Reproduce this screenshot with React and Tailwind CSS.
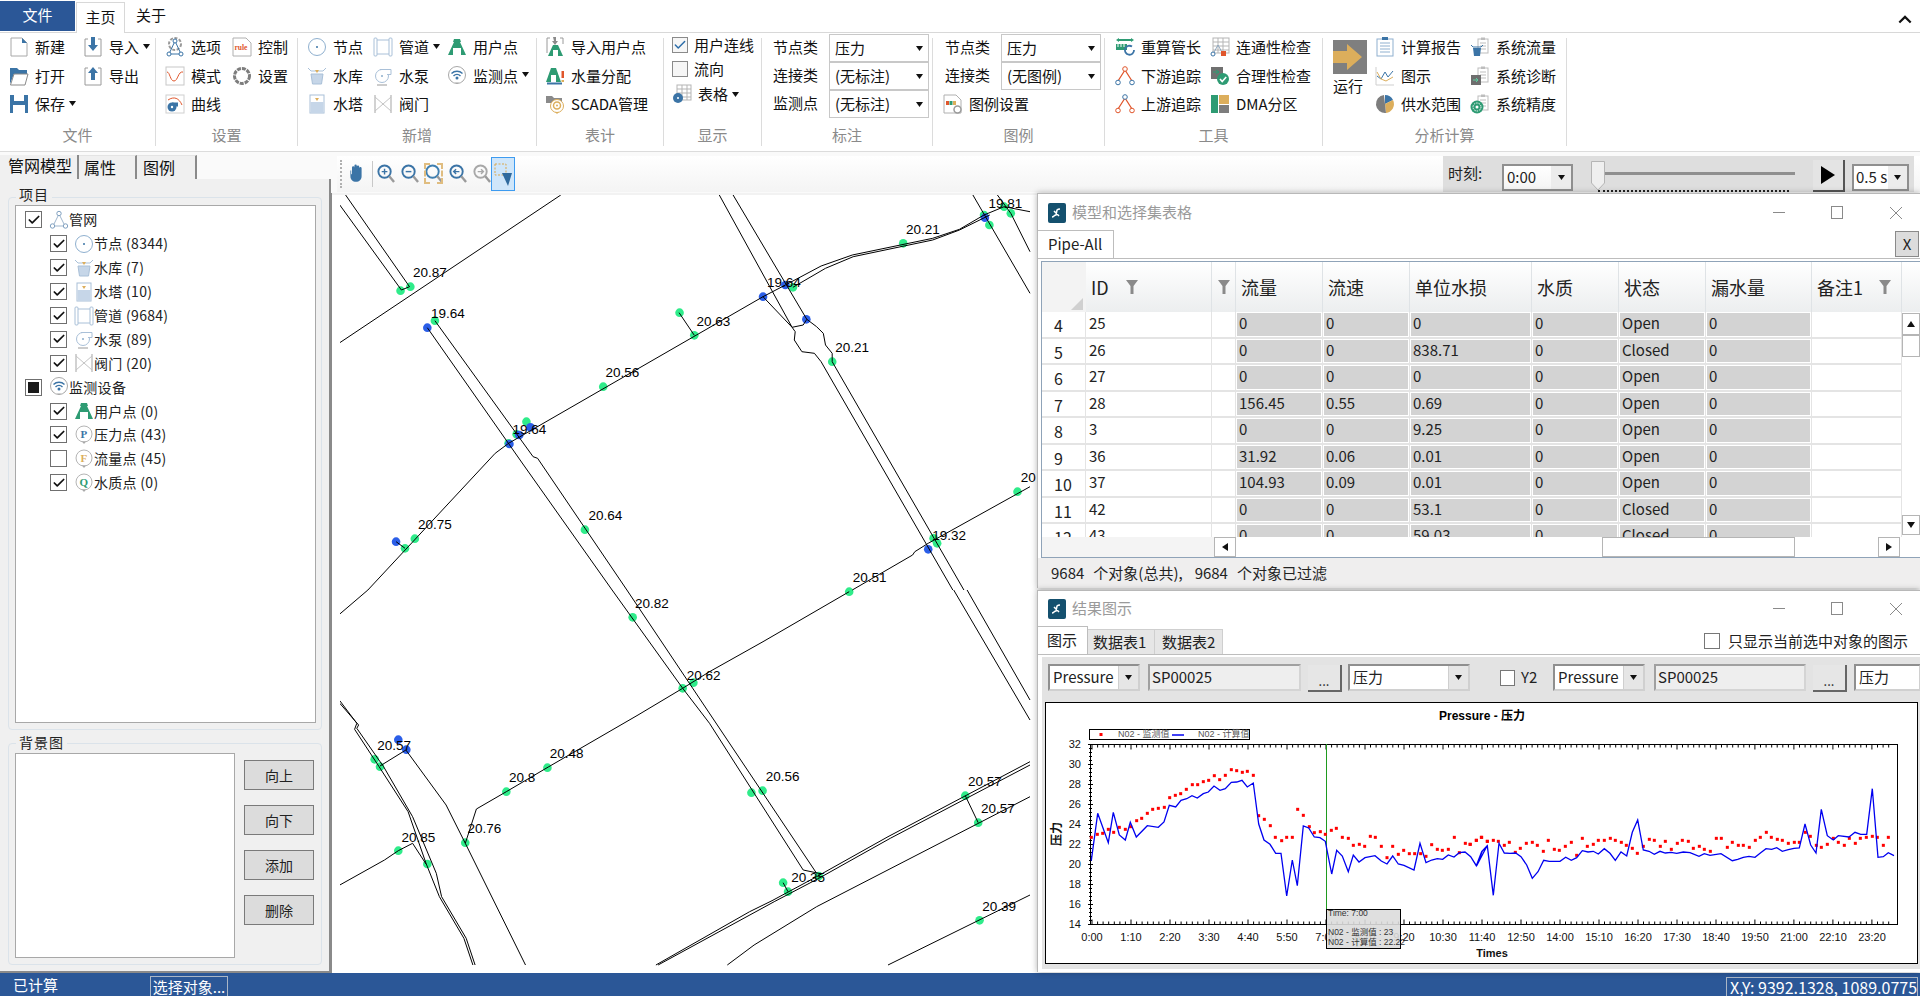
import React from "react";
import { Check } from "lucide-react";

const BLUE = "#3b74a6";
const GOLD = "#dcae5c";
const GREEN = "#2e9b73";
const RED = "#e0562c";
const PALE = "#c6d6e8";

const S = ({ children, size = 20 }) => (
  <svg viewBox="0 0 20 20" width={size} height={size} fill="none" className="block shrink-0">
    {children}
  </svg>
);

// ribbon and tree icons
const NewIcon = () => (
  <S>
    <path d="M2 1h11l5 5v13H2z" fill="#fff" stroke="#a8a8a8" />
    <path d="M13 1l5 5h-5z" fill={BLUE} />
  </S>
);
const OpenIcon = () => (
  <S>
    <path d="M1 2h7l2 2h8v4H5L1 18z" fill={BLUE} />
    <path d="M5 8h14l-3 11H1.500z" fill="#fff" stroke="#8a8a8a" />
  </S>
);
const SaveIcon = () => (
  <S>
    <rect x="1" y="1" width="18" height="18" fill={BLUE} />
    <rect x="5" y="1" width="10" height="6" fill="#fff" />
    <rect x="4" y="11" width="12" height="8" fill="#fff" />
  </S>
);
const DocArrow = ({ up }) => (
  <S>
    <path d="M2 2h3M15 2h3v17H2V2" stroke="#9a9a9a" fill="#fff" />
    <path d={up ? "M10 1l5 6h-3v7H8V7H5z" : "M8 0h4v8h3l-5 6-5-6h3z"} fill={BLUE} />
  </S>
);
const OptionsIcon = () => (
  <S>
    <circle cx="10" cy="7" r="6" stroke="#9a9a9a" strokeWidth="2" strokeDasharray="3 1.500" />
    <path d="M10 4L4 17M10 4l6 13M4 17h12" stroke={BLUE} />
    <circle cx="10" cy="4" r="2" fill="#fff" stroke={BLUE} />
    <circle cx="4" cy="17" r="2" fill="#fff" stroke={BLUE} />
    <circle cx="16" cy="17" r="2" fill="#fff" stroke={BLUE} />
  </S>
);
const RuleIcon = () => (
  <S>
    <path d="M1 1h13l5 5v13H1z" fill="#fff" stroke="#b0b0b0" />
    <text x="2.500" y="13" fontSize="7.500" fontWeight="700" fill={RED} fontFamily="Liberation Serif">rule</text>
  </S>
);
const PatternIcon = () => (
  <S>
    <rect x="1" y="1" width="18" height="18" fill="#fff" stroke="#c8c8c8" />
    <path d="M2 6c3 0 3 9 7 9s4-10 9-9" stroke={RED} />
  </S>
);
const GearIcon = () => (
  <S>
    <circle cx="10" cy="10" r="7.500" stroke="#7d7d7d" strokeWidth="3" strokeDasharray="4 1" />
  </S>
);
const CurveIcon = () => (
  <S>
    <rect x="1" y="1" width="18" height="18" fill="#fff" stroke="#d0d0d0" />
    <path d="M3 6c6-4 11-2 14 5" stroke={RED} />
    <circle cx="7" cy="13" r="4.500" fill={BLUE} />
    <rect x="7" y="8.500" width="6" height="4" fill={BLUE} />
    <circle cx="7" cy="13" r="1.200" fill="#fff" />
  </S>
);
const NodeIcon = () => (
  <S>
    <circle cx="10" cy="10" r="8.500" stroke="#8fb0cf" />
    <circle cx="10" cy="10" r="1" fill={BLUE} />
  </S>
);
const ReservoirIcon = () => (
  <S>
    <path d="M1 2l3 3h12l3-3" stroke="#a9c0d8" />
    <path d="M4 8h12l-1.500 10h-9z" fill={PALE} stroke="#a9c0d8" />
    <path d="M8 4h4l-2 3z" fill={GOLD} />
  </S>
);
const TankIcon = () => (
  <S>
    <rect x="3" y="1" width="14" height="18" fill="#fff" stroke="#a9c0d8" />
    <rect x="3.500" y="8" width="13" height="11" fill={PALE} />
    <path d="M8 4h4l-2 3z" fill={GOLD} />
  </S>
);
const PipeIcon = () => (
  <S>
    <rect x="1" y="1" width="3" height="18" rx="1" fill="#fff" stroke="#a9c0d8" />
    <rect x="16" y="1" width="3" height="18" rx="1" fill="#fff" stroke="#a9c0d8" />
    <path d="M4 3h12M4 17h12" stroke="#a9c0d8" />
  </S>
);
const PumpIcon = () => (
  <S>
    <circle cx="9" cy="10" r="6.500" fill="#fff" stroke="#a9c0d8" />
    <path d="M7 3.500h11v5h-4" fill="#fff" stroke="#a9c0d8" />
    <path d="M4 19h10" stroke="#bbb" strokeWidth="1.500" />
    <circle cx="9" cy="10" r=".8" fill={BLUE} />
  </S>
);
const ValveIcon = () => (
  <S>
    <path d="M2 1v18M18 1v18" stroke="#c4c4c4" strokeWidth="1.500" />
    <path d="M2 3l16 14M18 3L2 17" stroke="#c4c4c4" />
  </S>
);
const UserIcon = () => (
  <S>
    <path d="M7 2h6l1 3h-1l6 13H1L7 5H6z" fill={GREEN} />
    <rect x="6" y="11" width="8" height="7" fill="#fff" />
  </S>
);
const WifiIcon = () => (
  <S>
    <circle cx="10" cy="9" r="8.500" fill="#fff" stroke="#a8a8a8" />
    <path d="M10 18l-2-1.500h4z" fill="#a8a8a8" />
    <path d="M4.500 7.500a8 8 0 0 1 11 0M6.500 10a5 5 0 0 1 7 0" stroke={BLUE} strokeWidth="1.400" />
    <circle cx="10" cy="12" r="1.500" fill={BLUE} />
  </S>
);
const LetterPin = ({ letter, color }) => (
  <S>
    <circle cx="10" cy="9" r="8" fill="#fff" stroke="#b5b5b5" />
    <path d="M10 19l-2-2.500h4z" fill="#a8a8a8" />
    <text x="10" y="13" textAnchor="middle" fontSize="11" fontWeight="700" fill={color} fontFamily="Liberation Serif">{letter}</text>
  </S>
);
const NetIcon = () => (
  <S>
    <path d="M10 4L4 16M10 4l6 12M4 16h12" stroke="#9fb6cd" />
    <circle cx="10" cy="3.500" r="2.200" fill="#fff" stroke="#7fa0c0" />
    <circle cx="3.500" cy="16" r="2.200" fill="#fff" stroke="#7fa0c0" />
    <circle cx="16.500" cy="16" r="2.200" fill="#fff" stroke="#7fa0c0" />
  </S>
);
const ImportUserIcon = () => (
  <S>
    <path d="M2 1h3M15 1h3v6M2 1v15" stroke="#9a9a9a" />
    <path d="M8 0h3v4h2l-3 4-3-4h2z" fill="#8a8a8a" />
    <path d="M8 8h5l5 11H3z" fill={GREEN} />
    <rect x="8" y="13" width="5" height="6" fill="#fff" />
  </S>
);
const AllocIcon = () => (
  <S>
    <path d="M6 2h5l5 14H1z" fill={GREEN} />
    <rect x="6" y="9" width="5" height="7" fill="#fff" />
    <path d="M2 17.500h15" stroke={BLUE} strokeWidth="2" />
    <path d="M16.500 5h2.500v7h-2.500z" fill={RED} />
    <path d="M16.500 14h2.500v2h-2.500z" fill={GOLD} />
  </S>
);
const ScadaIcon = () => (
  <S>
    <path d="M1 2h6l2 2h8v5H1z" fill="#8a8a8a" />
    <circle cx="12" cy="12" r="6.500" fill="#fff" stroke={GOLD} />
    <circle cx="12" cy="11.500" r="3.500" stroke={GOLD} strokeWidth="1.500" />
    <circle cx="12" cy="11.500" r="1" fill={GOLD} />
    <path d="M12 20l-2-2h4z" fill={GOLD} />
  </S>
);
const GridIcon = () => (
  <S>
    <rect x="5" y="1" width="14" height="15" fill="#fff" stroke="#b5b5b5" />
    <path d="M5 5h14M5 9h14M5 13h14M10 1v15M15 1v15" stroke="#b5b5b5" />
    <circle cx="6" cy="14" r="5" fill={BLUE} />
    <rect x="5" y="13" width="2" height="2" fill="#cfe0ef" />
  </S>
);
const LegendIcon = () => (
  <S>
    <path d="M1 1h12l5 5v13H1z" fill="#fff" stroke="#b0b0b0" />
    <rect x="3" y="7" width="3" height="4" fill={RED} />
    <rect x="6.500" y="7" width="3" height="4" fill={GREEN} />
    <rect x="10" y="7" width="3" height="4" fill={GOLD} />
    <circle cx="14.500" cy="15.500" r="3.500" fill="#fff" stroke="#9a9a9a" strokeWidth="1.500" />
  </S>
);
const RecalcIcon = () => (
  <S>
    <path d="M3 3h14" stroke={GREEN} strokeWidth="2" />
    <path d="M1 3l3-2v4zM19 3l-3-2v4z" fill={GREEN} />
    <path d="M1 7h11v6H1z" fill={GREEN} />
    <path d="M3 7v3M6 7v3M9 7v3" stroke="#fff" />
    <path d="M19 13a4.500 4.500 0 1 1-2-3.500" stroke={BLUE} strokeWidth="1.800" />
  </S>
);
const TraceIcon = ({ down }) => (
  <S>
    <path d="M10 4L3 15M10 4l7 11" stroke={RED} strokeWidth="1.300" />
    <circle cx="10" cy="3" r="2.300" fill="#fff" stroke={down ? RED : BLUE} />
    <circle cx="3" cy="16.500" r="2.300" fill="#fff" stroke={down ? BLUE : RED} />
    <circle cx="17" cy="16.500" r="2.300" fill="#fff" stroke={down ? BLUE : RED} />
  </S>
);
const ConnectIcon = () => (
  <S>
    <rect x="3" y="1" width="16" height="15" fill="#fff" stroke="#b5b5b5" />
    <path d="M3 5h16M3 9h16M3 13h16M8 1v15M13 1v15" stroke="#b5b5b5" />
    <path d="M8 8L3 17M8 8l5 9" stroke="#8fa8c0" />
    <circle cx="3" cy="17" r="2" fill="#fff" stroke={BLUE} />
    <rect x="11" y="14" width="5" height="5" fill={RED} />
  </S>
);
const ReasonIcon = () => (
  <S>
    <rect x="1" y="1" width="12" height="12" fill="#707070" />
    <path d="M3 6h6M6 4l3 2-3 2" stroke={GREEN} />
    <circle cx="13" cy="13" r="6" fill={GREEN} />
    <path d="M10 13l2.200 2.500 4-4.500" stroke="#fff" strokeWidth="1.600" />
  </S>
);
const DmaIcon = () => (
  <S>
    <rect x="1" y="1" width="7" height="18" fill={GREEN} />
    <rect x="9" y="1" width="10" height="9" fill={GOLD} />
    <rect x="9" y="11" width="10" height="8" fill="#7d7d7d" />
  </S>
);
const ReportIcon = () => (
  <S>
    <rect x="2" y="2" width="16" height="17" fill="#fff" stroke="#8fb0cf" />
    <rect x="7" y="0" width="6" height="3" fill={BLUE} />
    <path d="M5 6h10M5 9h10M5 12h10M5 15h10" stroke="#8fb0cf" />
  </S>
);
const ChartIcon = () => (
  <S>
    <path d="M1 1v18h18" stroke="#cfcfcf" />
    <path d="M2 10l4 3 4-7 3 5 5-6" stroke={BLUE} />
    <path d="M2 6l4 7 5 2 7-4" stroke={GOLD} />
  </S>
);
const PieIcon = () => (
  <S>
    <path d="M10 10V1a9 9 0 0 1 8 5z" fill={BLUE} />
    <path d="M10 10l8-4a9 9 0 0 1-7 13z" fill={GOLD} />
    <path d="M10 10l1 9a9 9 0 0 1-2-18z" fill="#7d7d7d" />
  </S>
);
const Clip = ({ children }) => (
  <S>
    <rect x="8" y="2" width="10" height="14" fill="#fff" stroke="#bdbdbd" />
    <path d="M10 6h6M10 9h6M10 12h6" stroke="#bdbdbd" />
    <rect x="11" y="0.500" width="4" height="2.500" fill="#bdbdbd" />
    {children}
  </S>
);
const SysFlowIcon = () => (
  <Clip>
    <path d="M1 8l2 2h8l2-2" stroke={BLUE} />
    <path d="M3 11h8l-1 8H4z" fill={BLUE} />
  </Clip>
);
const SysDiagIcon = () => (
  <Clip>
    <rect x="1" y="9" width="10" height="10" fill="#6e6e6e" />
    <path d="M3 14h5M6 12l2 2-2 2" stroke="#5fd0a0" />
  </Clip>
);
const SysPrecIcon = () => (
  <Clip>
    <circle cx="7" cy="13" r="6.500" fill={GREEN} />
    <circle cx="7" cy="13" r="4" stroke="#fff" strokeDasharray="1.500 1" />
    <circle cx="7" cy="13" r="1.500" fill="#fff" />
  </Clip>
);
const RunIcon = () => (
  <svg viewBox="0 0 34 34" width="34" height="34" className="block">
    <rect width="34" height="34" fill="#7f7f7f" />
    <path d="M0 11h14V4l15 13-15 13v-7H0z" fill={GOLD} />
  </svg>
);

const Caret = () => (
  <svg viewBox="0 0 7 5" width="7" height="5" className="block shrink-0">
    <path d="M0 0h7L3.500 5z" fill="#111" />
  </svg>
);

const Item = ({ icon, label, drop }) => (
  <div className="flex items-center h-[28.5px] whitespace-nowrap">
    <span className="w-[20px] mr-[6px] shrink-0">{icon}</span>
    <span>{label}</span>
    {drop && <span className="ml-[4px] mb-[2px]"><Caret /></span>}
  </div>
);

const Group = ({ label, width, children }) => (
  <>
    <div className={`flex flex-col h-[118px] ${width}`}>
      <div className="h-[92px] flex">{children}</div>
      <div className="h-[20px] leading-[20px] text-center text-[#8a8a8a]">{label}</div>
    </div>
    <div className="w-px h-[108px] mt-[5px] bg-[#dcdcdc]" />
  </>
);

const Combo = ({ text }) => (
  <div className="flex items-center justify-between w-[100px] h-[28px] border border-[#c8c8c8] pl-[5px] pr-[5px]">
    <span>{text}</span>
    <Caret />
  </div>
);

const LabelCombo = ({ label, text }) => (
  <div className="flex items-center h-[28px]">
    <span className="w-[56px] -mt-[2px]">{label}</span>
    <Combo text={text} />
  </div>
);

const MiniCheck = ({ checked }) => (
  <span className="w-[16px] h-[16px] border border-[#8a8a8a] bg-[#f6f6f6] flex items-center justify-center shrink-0">
    {checked && <Check size={14} strokeWidth={2.5} color="#2b6ca8" />}
  </span>
);

const Ribbon = () => (
  <div className="h-[119px] flex border-b border-[#dcdcdc] bg-white text-[15px] text-[#111]">
    <Group label="文件" width="w-[155px]">
      <div className="pl-[9px] w-[83px]">
        <Item icon={<NewIcon />} label="新建" />
        <Item icon={<OpenIcon />} label="打开" />
        <Item icon={<SaveIcon />} label="保存" drop />
      </div>
      <div>
        <Item icon={<DocArrow />} label="导入" drop />
        <Item icon={<DocArrow up />} label="导出" />
      </div>
    </Group>
    <Group label="设置" width="w-[141px]">
      <div className="pl-[9px] w-[76px]">
        <Item icon={<OptionsIcon />} label="选项" />
        <Item icon={<PatternIcon />} label="模式" />
        <Item icon={<CurveIcon />} label="曲线" />
      </div>
      <div>
        <Item icon={<RuleIcon />} label="控制" />
        <Item icon={<GearIcon />} label="设置" />
      </div>
    </Group>
    <Group label="新增" width="w-[238px]">
      <div className="pl-[9px] w-[75px]">
        <Item icon={<NodeIcon />} label="节点" />
        <Item icon={<ReservoirIcon />} label="水库" />
        <Item icon={<TankIcon />} label="水塔" />
      </div>
      <div className="w-[74px]">
        <Item icon={<PipeIcon />} label="管道" drop />
        <Item icon={<PumpIcon />} label="水泵" />
        <Item icon={<ValveIcon />} label="阀门" />
      </div>
      <div>
        <Item icon={<UserIcon />} label="用户点" />
        <Item icon={<WifiIcon />} label="监测点" drop />
      </div>
    </Group>
    <Group label="表计" width="w-[126px]">
      <div className="pl-[8px]">
        <Item icon={<ImportUserIcon />} label="导入用户点" />
        <Item icon={<AllocIcon />} label="水量分配" />
        <Item icon={<ScadaIcon />} label="SCADA管理" />
      </div>
    </Group>
    <Group label="显示" width="w-[97px]">
      <div className="pl-[8px]">
        <div className="flex items-center gap-[6px] h-[24px] whitespace-nowrap"><MiniCheck checked />用户连线</div>
        <div className="flex items-center gap-[6px] h-[24px] whitespace-nowrap"><MiniCheck />流向</div>
        <div className="flex items-center h-[26px] whitespace-nowrap">
          <span className="w-[20px] mr-[6px]"><GridIcon /></span>表格<span className="ml-[4px]"><Caret /></span>
        </div>
      </div>
    </Group>
    <Group label="标注" width="w-[170px]">
      <div className="pl-[11px] pt-[1px]">
        <LabelCombo label="节点类" text="压力" />
        <LabelCombo label="连接类" text="(无标注)" />
        <LabelCombo label="监测点" text="(无标注)" />
      </div>
    </Group>
    <Group label="图例" width="w-[171px]">
      <div className="pl-[12px] pt-[1px]">
        <LabelCombo label="节点类" text="压力" />
        <LabelCombo label="连接类" text="(无图例)" />
        <div className="-ml-[2px]"><Item icon={<LegendIcon />} label="图例设置" /></div>
      </div>
    </Group>
    <Group label="工具" width="w-[217px]">
      <div className="pl-[10px] w-[105px]">
        <Item icon={<RecalcIcon />} label="重算管长" />
        <Item icon={<TraceIcon down />} label="下游追踪" />
        <Item icon={<TraceIcon />} label="上游追踪" />
      </div>
      <div>
        <Item icon={<ConnectIcon />} label="连通性检查" />
        <Item icon={<ReasonIcon />} label="合理性检查" />
        <Item icon={<DmaIcon />} label="DMA分区" />
      </div>
    </Group>
    <Group label="分析计算" width="w-[243px]">
      <div className="pl-[10px] pt-[7px] w-[52px]">
        <RunIcon />
        <div className="mt-[1px] whitespace-nowrap">运行</div>
      </div>
      <div className="w-[95px]">
        <Item icon={<ReportIcon />} label="计算报告" />
        <Item icon={<ChartIcon />} label="图示" />
        <Item icon={<PieIcon />} label="供水范围" />
      </div>
      <div>
        <Item icon={<SysFlowIcon />} label="系统流量" />
        <Item icon={<SysDiagIcon />} label="系统诊断" />
        <Item icon={<SysPrecIcon />} label="系统精度" />
      </div>
    </Group>
  </div>
);

const TreeCheck = ({ state }) => (
  <span className="w-[17px] h-[17px] border border-[#6f6f6f] bg-white flex items-center justify-center shrink-0">
    {state === "on" && <Check size={14} strokeWidth={3} color="#111" />}
    {state === "mixed" && <span className="w-[11px] h-[11px] bg-[#1a1a1a]" />}
  </span>
);

const TreeRow = ({ level, state, icon, text }) => (
  <div className={`flex items-center h-[23.9px] whitespace-nowrap ${level === 1 ? "pl-[9px]" : "pl-[34px]"}`}>
    <TreeCheck state={state} />
    <span className="ml-[7px]">{icon}</span>
    <span>{text}</span>
  </div>
);

const SideButton = ({ text }) => (
  <div className="w-[70px] h-[30px] bg-[#dcdcdc] border border-[#7a7a7a] flex items-center justify-center text-[14px]">{text}</div>
);

const LeftPanel = () => (
  <div className="w-[331px] shrink-0 flex flex-col pt-[3px] bg-[#fafafa]">
    <div className="flex h-[24px] text-[16px] text-[#111]">
      <div className="w-[79px] bg-[#f0f0f0] border-r-2 border-[#8a8a8a] pl-[8px] leading-[20px]">管网模型</div>
      <div className="w-[58px] bg-[#f0f0f0] border-r-2 border-[#8a8a8a] pl-[5px] leading-[23px] border-t border-t-[#e4e4e4]">属性</div>
      <div className="w-[60px] bg-[#f0f0f0] border-r-2 border-[#8a8a8a] pl-[6px] leading-[23px] border-t border-t-[#e4e4e4]">图例</div>
    </div>
    <div className="flex-1 bg-[#f0f0f0] border-r-2 border-b-2 border-[#8a8a8a] pt-[18px] pl-[8px] text-[14px] text-[#222]">
      <div className="relative w-[314px] h-[533px] border border-[#dbe3ea] rounded-[4px] pl-[6px] pt-[7px]">
        <span className="absolute left-[7px] -top-[14px] px-[3px] bg-[#f0f0f0] tracking-[1px]">项目</span>
        <div className="w-[301px] h-[518px] bg-white border border-[#a8a8a8] pt-[2px] tracking-[0.3px]">
          <TreeRow level={1} state="on" icon={<NetIcon />} text="管网" />
          <TreeRow level={2} state="on" icon={<NodeIcon />} text="节点 (8344)" />
          <TreeRow level={2} state="on" icon={<ReservoirIcon />} text="水库 (7)" />
          <TreeRow level={2} state="on" icon={<TankIcon />} text="水塔 (10)" />
          <TreeRow level={2} state="on" icon={<PipeIcon />} text="管道 (9684)" />
          <TreeRow level={2} state="on" icon={<PumpIcon />} text="水泵 (89)" />
          <TreeRow level={2} state="on" icon={<ValveIcon />} text="阀门 (20)" />
          <TreeRow level={1} state="mixed" icon={<WifiIcon />} text="监测设备" />
          <TreeRow level={2} state="on" icon={<UserIcon />} text="用户点 (0)" />
          <TreeRow level={2} state="on" icon={<LetterPin letter="P" color={BLUE} />} text="压力点 (43)" />
          <TreeRow level={2} state="off" icon={<LetterPin letter="F" color={GOLD} />} text="流量点 (45)" />
          <TreeRow level={2} state="on" icon={<LetterPin letter="Q" color={GREEN} />} text="水质点 (0)" />
        </div>
      </div>
      <div className="relative w-[314px] h-[222px] mt-[13px] border border-[#dbe3ea] rounded-[4px] pl-[6px] pt-[9px] flex">
        <span className="absolute left-[7px] -top-[12px] px-[3px] bg-[#f0f0f0] tracking-[1px]">背景图</span>
        <div className="w-[220px] h-[205px] bg-white border border-[#a8a8a8]" />
        <div className="ml-[9px] pt-[7px] flex flex-col gap-[15px]">
          <SideButton text="向上" />
          <SideButton text="向下" />
          <SideButton text="添加" />
          <SideButton text="删除" />
        </div>
      </div>
    </div>
  </div>
);

const Mag = ({ children, color = BLUE }) => (
  <svg viewBox="0 0 20 22" width="19" height="21" fill="none" className="block shrink-0">
    <circle cx="9" cy="9" r="6.500" stroke={color} strokeWidth="2" />
    <path d="M14 14l5 6" stroke="#9a9a9a" strokeWidth="2.500" />
    <g stroke={color} strokeWidth="1.500">{children}</g>
  </svg>
);

const Toolbar = () => (
  <div className="h-[41px] pt-[4px] bg-[#fafafa] pl-[6px]">
    <div className="h-[36px] flex items-center justify-between bg-gradient-to-b from-white to-[#f4f4f4]">
      <div className="flex items-center h-full">
        <div className="w-[2px] h-[28px] ml-[3px] border-l-2 border-dotted border-[#b0b0b0]" />
        <svg viewBox="0 0 20 24" width="16" height="20" className="block ml-[6px] -mt-[2px]">
          <path d="M3 9v7c0 4 3 7 7 7s7-3 7-7V6a1.500 1.500 0 0 0-3 0v5V4a1.500 1.500 0 0 0-3 0v7V3a1.500 1.500 0 0 0-3 0v8V5a1.500 1.500 0 0 0-3 0v8l-1 1V9a1 1 0 0 0-1 0z" fill={BLUE} />
        </svg>
        <div className="w-px h-[26px] ml-[8px] mr-[3px] bg-[#c8c8c8]" />
        <div className="flex items-center gap-[5px] -mt-[2px]">
          <Mag><path d="M6 9h6M9 6v6" /></Mag>
          <Mag><path d="M6 9h6" /></Mag>
          <span className="w-[19px] h-[21px] outline-2 outline-dashed outline-[#e0bd80] -outline-offset-2"><Mag color="#3f7fb0" /></span>
          <Mag><path d="M12 9H6M8.500 6.500L6 9l2.500 2.500" /></Mag>
          <Mag color="#a8a8a8"><path d="M6 9h6M9.500 6.500L12 9l-2.500 2.500" /></Mag>
          <div className="w-[24px] h-[34px] -ml-[5px] mt-[2px] bg-[#cfe6fa] border border-[#3d9bf0] flex items-center justify-center">
            <svg viewBox="0 0 20 26" width="20" height="26" className="block">
              <rect x="2" y="3" width="11" height="11" fill="none" stroke="#d9a74f" strokeDasharray="2 1.500" />
              <path d="M9 12h10l-4 13z" fill="#2f6a9e" />
            </svg>
          </div>
        </div>
      </div>
      <div className="w-[471px] h-[36px] mr-[6px] bg-[#dedede] flex items-center text-[15px] text-[#222]">
        <span className="ml-[5px] w-[54px] -mt-[2px]">时刻:</span>
        <div className="w-[71px] h-[27px] mt-[6px] border-2 border-[#8f8f8f] bg-gradient-to-b from-white to-[#f4f4f4] flex items-center justify-between pl-[3px]">
          <span>0:00</span>
          <span className="w-[20px] h-full bg-[#ececec] flex items-center justify-center"><Caret /></span>
        </div>
        <div className="relative ml-[18px] w-[204px] h-[36px]">
          <div className="absolute left-[14px] top-[16px] w-[190px] h-[3px] bg-[#8f8f8f]" />
          <svg viewBox="0 0 14 30" width="14" height="30" className="absolute left-0 top-[5px]">
            <path d="M.5 .5h13V22L7 29 .5 22z" fill="#efefef" stroke="#b5b5b5" />
          </svg>
          <div className="absolute left-[7px] top-[34px] w-[191px] border-t-2 border-dotted border-[#222]" />
        </div>
        <div className="ml-[18px] w-[32px] h-[32px] mt-[3px] bg-[#e4e4e4] border-r-2 border-b-2 border-[#555] flex items-center justify-center">
          <svg viewBox="0 0 14 18" width="14" height="18" className="block"><path d="M0 0l14 9-14 9z" fill="#000" /></svg>
        </div>
        <div className="ml-[7px] w-[57px] h-[27px] mt-[6px] border-2 border-[#8f8f8f] bg-white flex items-center justify-between pl-[2px]">
          <span>0.5 s</span>
          <span className="w-[19px] h-full bg-[#ececec] flex items-center justify-center"><Caret /></span>
        </div>
      </div>
    </div>
  </div>
);

// map coordinates below were read off two crops of the canvas: z7 starts at y 190, z8 at y 590
const z7 = ([x, y]) => [330 + x / 2.24, 190 + y / 3];
const z8 = ([x, y]) => [330 + x / 2.24, 590 + y / 3];
const pts = (list, f) => list.map((p) => f(p).map((n) => n.toFixed(1)).join(",")).join(" ");

const linesZ7 = [
  [[22, 45], [160, 300], [178, 290], [35, 15]],
  [[22, 458], [517, 15]],
  [[218, 413], [432, 822], [632, 1200]],
  [[235, 392], [455, 800], [465, 805], [665, 1200]],
  [[872, 15], [1035, 412], [1060, 405], [1068, 388], [903, 15]],
  [[1068, 388], [1090, 410], [1105, 430], [1110, 465], [1125, 490], [1125, 515], [1420, 1200]],
  [[1035, 412], [1042, 425], [1040, 450], [1057, 485], [1085, 490], [1100, 515], [1395, 1200]],
  [[85, 1200], [370, 790], [400, 760], [970, 320], [1020, 285], [1100, 228], [1170, 195], [1350, 145], [1410, 118], [1465, 75], [1510, 50], [1568, 65]],
  [[1037, 292], [1110, 235], [1172, 200], [1350, 150], [1410, 120], [1478, 75]],
  [[782, 368], [816, 436]],
  [[970, 320], [1035, 412]],
  [[1440, 15], [1568, 310]],
  [[1495, 15], [1525, 70], [1568, 185]],
  [[1170, 1200], [1305, 1095], [1310, 1085], [1340, 1060], [1568, 890]],
  [[148, 1055], [168, 1075]],
];
const linesZ8 = [
  [[85, 0], [22, 72]],
  [[632, 0], [790, 295], [850, 400], [1060, 840], [1095, 850]],
  [[665, 0], [1090, 850]],
  [[1397, 0], [1568, 390]],
  [[1427, 0], [1568, 330]],
  [[1163, 5], [970, 155], [850, 245], [790, 295], [690, 375], [490, 530], [395, 605], [328, 657], [303, 760]],
  [[22, 332], [60, 400], [55, 418], [110, 530], [175, 665], [215, 820], [245, 920], [300, 1045], [320, 1125]],
  [[22, 340], [64, 405], [60, 415], [120, 530], [185, 680], [238, 850], [250, 920], [305, 1045], [325, 1125]],
  [[112, 528], [170, 480], [260, 645], [303, 760], [438, 1125]],
  [[22, 885], [122, 810], [153, 782], [185, 760], [215, 822]],
  [[1568, 515], [1250, 740], [1090, 860], [990, 932], [940, 965], [730, 1125]],
  [[1568, 525], [1255, 745], [1095, 865], [995, 935], [735, 1125]],
  [[1568, 620], [1090, 950], [950, 1065], [890, 1125]],
  [[1568, 915], [1250, 1125]],
  [[1423, 617], [1452, 698]],
  [[1015, 878], [1026, 905]],
];
const greenZ7 = [[158, 302], [180, 290], [235, 392], [816, 436], [783, 368], [612, 590], [440, 695], [418, 733], [400, 760], [168, 1075], [190, 1046], [571, 1019], [1037, 292], [1125, 515], [1284, 160], [1465, 75], [1477, 105], [1510, 50], [1525, 70], [1360, 1060], [1540, 905], [1352, 1045]];
const blueZ7 = [[218, 413], [449, 712], [424, 735], [402, 762], [148, 1055], [970, 320], [1020, 285], [1067, 388], [1467, 83], [1340, 1078]];
const greenZ8 = [[678, 82], [790, 295], [814, 278], [487, 533], [395, 605], [303, 758], [100, 508], [112, 530], [153, 782], [218, 822], [944, 608], [969, 602], [1015, 878], [1026, 905], [1095, 858], [1423, 617], [1452, 698], [1455, 991], [1163, 5]];
const blueZ8 = [[153, 449], [171, 479]];
const labelsZ7 = [["20.87", 186, 245], ["19.64", 226, 370], ["20.63", 821, 392], ["20.56", 617, 545], ["19.64", 409, 716], ["19.64", 979, 275], ["20.21", 1132, 471], ["20.21", 1290, 118], ["19.81", 1475, 40], ["20.75", 197, 1002], ["20.64", 579, 974], ["19.32", 1349, 1036], ["20.51", 1171, 1160], ["20", 1547, 860]];
const labelsZ8 = [["20.82", 683, 40], ["20.62", 799, 256], ["20.48", 492, 490], ["20.8", 401, 562], ["20.56", 976, 558], ["20.76", 308, 713], ["20.85", 160, 740], ["20.57", 106, 465], ["20.35", 1033, 861], ["20.57", 1429, 573], ["20.57", 1458, 655], ["20.39", 1461, 948]];

const Dot = ({ p, fill }) => <circle cx={p[0]} cy={p[1]} r="4.300" fill={fill} />;
const MapLabel = ({ t, p }) => (
  <text x={p[0]} y={p[1] + 5} fontSize="13.500" fill="#000" fontFamily="Liberation Sans">{t}</text>
);

const NetworkMap = () => (
  <svg viewBox="331 193 1589 780" className="block w-[1589px] h-[780px] bg-white">
    <defs>
      <clipPath id="mapClip"><rect x="340" y="195" width="1580" height="778" /></clipPath>
    </defs>
    <rect x="331" y="193" width="1589" height="2" fill="#f2f2f2" />
    <path d="M331.500 193v780" stroke="#8a8a8a" />
    <g clipPath="url(#mapClip)">
      {greenZ7.map((p, i) => <Dot key={i} p={z7(p)} fill="#2fec8a" />)}
      {greenZ8.map((p, i) => <Dot key={i} p={z8(p)} fill="#2fec8a" />)}
      {blueZ7.map((p, i) => <Dot key={i} p={z7(p)} fill="#2b5ee8" />)}
      {blueZ8.map((p, i) => <Dot key={i} p={z8(p)} fill="#2b5ee8" />)}
      {linesZ7.map((l, i) => <polyline key={i} points={pts(l, z7)} fill="none" stroke="#000" strokeWidth="1" />)}
      {linesZ8.map((l, i) => <polyline key={i} points={pts(l, z8)} fill="none" stroke="#000" strokeWidth="1" />)}
      {labelsZ7.map(([t, x, y], i) => <MapLabel key={i} t={t} p={z7([x, y])} />)}
      {labelsZ8.map(([t, x, y], i) => <MapLabel key={i} t={t} p={z8([x, y])} />)}
    </g>
  </svg>
);

const AppIcon = () => (
  <svg viewBox="0 0 18 20" width="18" height="20" className="block shrink-0">
    <rect width="18" height="20" rx="2" fill="#14506e" />
    <path d="M4 14c2 0 2-2 4-2l1-5c1-1 2-1 3-1M6 8l5 5" stroke="#fff" strokeWidth="1.500" fill="none" />
  </svg>
);

const WindowTitle = ({ title, height }) => (
  <div className={`flex items-center ${height} pl-[10px] text-[15px] text-[#9a9a9a]`}>
    <AppIcon />
    <span className="ml-[6px]">{title}</span>
    <div className="ml-auto flex items-center">
      <span className="w-[12px] h-px bg-[#8a8a8a]" />
      <span className="ml-[46px] w-[12px] h-[13px] border border-[#8a8a8a]" />
      <svg viewBox="0 0 14 14" width="14" height="14" className="block ml-[46px] mr-[17px]">
        <path d="M1 1l12 12M13 1L1 13" stroke="#8a8a8a" />
      </svg>
    </div>
  </div>
);

const tableCols = "grid grid-cols-[44px_126px_24px_87px_87px_122px_87px_87px_106px_90px]";
const tableRows = [
  [4, 25, 0, 0, 0, 0, "Open", 0],
  [5, 26, 0, 0, "838.71", 0, "Closed", 0],
  [6, 27, 0, 0, 0, 0, "Open", 0],
  [7, 28, "156.45", "0.55", "0.69", 0, "Open", 0],
  [8, 3, 0, 0, "9.25", 0, "Open", 0],
  [9, 36, "31.92", "0.06", "0.01", 0, "Open", 0],
  [10, 37, "104.93", "0.09", "0.01", 0, "Open", 0],
  [11, 42, 0, 0, "53.1", 0, "Closed", 0],
  [12, 43, 0, 0, "59.03", 0, "Closed", 0],
];

const Funnel = () => (
  <svg viewBox="0 0 12 14" width="12" height="14" className="block shrink-0">
    <path d="M0 0h12L7.500 6v8h-3V6z" fill="#8a8a8a" />
  </svg>
);

const Head = ({ text, filter, pad = "pl-[5px]" }) => (
  <div className={`flex items-center h-full ${pad} border-r border-[#dfe3e6] text-[18px] text-[#222]`}>
    {text}
    {filter && <span className={text === "ID" ? "ml-[17px]" : "ml-[16px]"}><Funnel /></span>}
  </div>
);

const Cell = ({ v, gray }) => (
  <div className="h-full border-r border-b-2 border-[#e4e4e4] p-[1px]">
    <div className={`h-full pl-[2px] leading-[19px] text-[15px] text-[#222] ${gray ? "bg-[#d3d3d3]" : ""}`}>{v}</div>
  </div>
);

const ScrollBtn = ({ d, cls }) => (
  <div className={`bg-white border border-[#b5b5b5] flex items-center justify-center ${cls}`}>
    <svg viewBox="0 0 10 10" width="10" height="10" className="block"><path d={d} fill="#111" /></svg>
  </div>
);

const TableWindow = () => (
  <div className="absolute left-[706px] top-0 w-[883px] h-[395px] bg-white border-l border-t border-[#b8b8b8] shadow-[0_0_6px_rgba(0,0,0,0.3)] flex flex-col">
    <WindowTitle title="模型和选择集表格" height="h-[37px]" />
    <div className="h-[28px] flex justify-between items-end border-b border-[#bdbdbd] text-[15px] text-[#222]">
      <div className="w-[76px] h-[28px] bg-white border-t border-r border-[#bdbdbd] pl-[10px] leading-[26px]">Pipe-All</div>
      <div className="w-[24px] h-[26px] mr-[1px] mb-[1px] bg-[#dcdcdc] border border-[#8a8a8a] text-center leading-[24px]">X</div>
    </div>
    <div className="mt-[2px] ml-[3px] h-[297px] border-t border-l border-b border-[#8fa3b8] flex flex-col">
      <div className={`${tableCols} h-[50px] bg-gradient-to-b from-white to-[#eceeef] shrink-0`}>
        <div className="relative bg-[#f3f3f3]">
          <svg viewBox="0 0 12 12" width="12" height="12" className="absolute right-[3px] bottom-[2px]"><path d="M12 0v12H0z" fill="#d0d0d0" /></svg>
        </div>
        <Head text="ID" filter />
        <div className="flex items-center justify-center border-r border-[#dfe3e6]"><Funnel /></div>
        <Head text="流量" />
        <Head text="流速" />
        <Head text="单位水损" />
        <Head text="水质" />
        <Head text="状态" />
        <Head text="漏水量" />
        <Head text="备注1" filter />
      </div>
      <div className="flex h-[225px] shrink-0">
        <div className="w-[860px] overflow-hidden">
          {tableRows.map((r) => (
            <div key={r[0]} className={`${tableCols} h-[26.5px]`}>
              <div className="bg-white border-r border-b-2 border-[#e4e4e4] pl-[12px] pt-[3px] text-[16px] leading-[20px] text-[#222]">{r[0]}</div>
              <Cell v={r[1]} />
              <Cell />
              <Cell v={r[2]} gray />
              <Cell v={r[3]} gray />
              <Cell v={r[4]} gray />
              <Cell v={r[5]} gray />
              <Cell v={r[6]} gray />
              <Cell v={r[7]} gray />
              <Cell />
            </div>
          ))}
        </div>
        <div className="flex-1 bg-white flex flex-col pt-[1px]">
          <ScrollBtn d="M5 2l4 6H1z" cls="h-[22px]" />
          <div className="h-[22px] border border-[#b5b5b5]" />
          <div className="flex-1" />
          <ScrollBtn d="M5 8L1 2h8z" cls="h-[20px] mb-[2px]" />
        </div>
      </div>
      <div className="flex-1 flex items-stretch bg-white">
        <div className="w-[172px] bg-[#f4f4f4]" />
        <ScrollBtn d="M2 5l6-4v8z" cls="w-[22px]" />
        <div className="w-[366px]" />
        <div className="w-[193px] border border-[#b5b5b5]" />
        <div className="w-[83px]" />
        <ScrollBtn d="M8 5L2 1v8z" cls="w-[22px]" />
      </div>
    </div>
    <div className="flex-1 bg-[#efeeee] flex items-center pl-[13px] text-[15px] text-[#222] whitespace-pre">
      <span>9684</span>
      <span className="ml-[9px]">个对象(总共),</span>
      <span className="ml-[12px]">9684</span>
      <span className="ml-[9px]">个对象已过滤</span>
    </div>
  </div>
);

const DropField = ({ text, w }) => (
  <div className={`flex items-center justify-between h-[27px] ${w} bg-white border-2 border-[#d0d0d0] border-t-[#8f8f8f] border-l-[#8f8f8f] pl-[3px] overflow-hidden shrink-0`}>
    <span>{text}</span>
    <span className="w-[20px] h-full bg-[#e6e6e6] border-l border-[#cfcfcf] flex items-center justify-center"><Caret /></span>
  </div>
);
const TextField = ({ text, w }) => (
  <div className={`flex items-center h-[27px] ${w} bg-[#eeeeee] border-2 border-[#d4d4d4] border-t-[#a0a0a0] border-l-[#a0a0a0] pl-[2px] shrink-0`}>{text}</div>
);
const DotsButton = () => (
  <div className="w-[34px] h-[27px] mt-[1px] bg-[#e6e6e6] border-r-2 border-b-2 border-[#666] flex items-center justify-center text-[13px] leading-[13px] pt-[6px] shrink-0">...</div>
);

// result chart, values read off two crops: left one maps from x 1040, right one from x 1470
const L = (x) => 1040 + x / 3;
const R = (x) => 1470 + x / 3;
const Y = (y) => 700 + y / 3;
const blueL = [[154,482],[173,340],[205,428],[220,337],[238,405],[256,420],[271,367],[289,411],[322,377],[355,382],[372,366],[388,316],[407,321],[423,301],[440,296],[456,287],[472,294],[490,281],[505,276],[522,258],[540,271],[556,266],[574,247],[590,246],[606,241],[622,261],[640,249],[656,372],[672,420],[690,433],[707,460],[723,460],[740,588],[757,480],[772,557],[790,378],[806,384],[823,411],[840,413],[856,424],[875,522],[890,451],[907,468],[925,515],[940,465],[957,486],[975,473],[1005,467],[1024,483],[1041,492],[1058,468],[1075,492],[1092,496],[1122,510],[1140,430],[1158,488],[1175,480],[1192,476],[1208,478],[1225,465],[1242,471],[1258,458],[1275,456],[1292,470],[1309,497],[1325,455],[1341,438]];
const blueR = [[20,497],[37,453],[52,437],[70,586],[87,430],[103,459],[120,460],[137,459],[153,470],[170,495],[187,535],[204,515],[221,481],[238,484],[270,484],[287,472],[304,481],[320,473],[337,452],[354,456],[370,454],[385,462],[403,446],[420,460],[436,481],[453,456],[470,468],[487,397],[503,360],[520,450],[537,454],[553,463],[570,454],[586,459],[603,457],[620,460],[640,456],[660,458],[687,469],[703,461],[720,466],[753,461],[787,482],[803,478],[820,472],[837,469],[855,472],[872,458],[888,446],[905,448],[920,443],[937,454],[955,449],[972,445],[988,444],[1005,372],[1022,435],[1038,459],[1054,328],[1072,407],[1090,420],[1105,407],[1137,411],[1155,397],[1172,403],[1190,403],[1207,266],[1224,472],[1240,470],[1255,458],[1272,467]];
const redL = [[154,412],[172,403],[188,400],[205,388],[221,397],[238,382],[256,388],[272,380],[290,362],[305,355],[322,340],[338,328],[355,325],[373,322],[389,293],[406,286],[422,281],[439,268],[457,254],[473,254],[490,245],[506,241],[523,227],[539,239],[556,226],[574,209],[590,212],[607,217],[622,214],[640,226],[656,347],[673,358],[691,377],[706,412],[725,422],[740,412],[757,412],[773,328],[790,346],[808,380],[823,398],[841,395],[856,403],[874,391],[889,385],[907,412],[925,415],[940,436],[958,433],[974,439],[991,409],[1006,412],[1024,439],[1041,473],[1058,439],[1075,463],[1091,451],[1108,461],[1124,461],[1142,461],[1158,469],[1175,434],[1192,448],[1207,451],[1225,448],[1243,412],[1258,458],[1276,430],[1291,433],[1309,421],[1325,412],[1342,424]];
const redR = [[0,433],[19,421],[34,412],[52,424],[70,421],[85,424],[103,436],[118,427],[136,457],[151,445],[169,430],[187,427],[202,436],[220,454],[235,421],[253,448],[268,451],[286,439],[304,427],[320,466],[337,415],[352,439],[370,433],[385,421],[403,421],[421,415],[436,421],[454,427],[469,436],[487,445],[502,460],[520,439],[538,418],[553,421],[571,439],[586,424],[604,448],[622,430],[637,421],[655,424],[670,445],[688,439],[703,448],[721,454],[739,415],[754,415],[772,442],[787,427],[805,436],[820,436],[838,442],[856,421],[871,412],[889,397],[904,412],[922,418],[937,421],[955,430],[973,427],[988,427],[1006,397],[1021,409],[1039,436],[1054,442],[1072,433],[1090,415],[1105,427],[1123,436],[1138,415],[1156,430],[1171,415],[1189,412],[1207,409],[1222,412],[1240,436],[1255,412]];

const bluePts = [...blueL.map(([x, y]) => [L(x), Y(y)]), ...blueR.map(([x, y]) => [R(x), Y(y)])].map((p) => p.map((n) => n.toFixed(1)).join(",")).join(" ");
const redDots = [...redL.map(([x, y]) => [L(x), Y(y)]), ...redR.map(([x, y]) => [R(x), Y(y)])];
const timeLabels = ["0:00", "1:10", "2:20", "3:30", "4:40", "5:50", "7:00", "8:10", "9:20", "10:30", "11:40", "12:50", "14:00", "15:10", "16:20", "17:30", "18:40", "19:50", "21:00", "22:10", "23:20"];
const minorX = Array.from({ length: 144 }, (_, i) => 1092 + i * 5.571);
const yTicks = Array.from({ length: 46 }, (_, i) => 744 + i * 4);

const PressureChart = () => (
  <svg viewBox="1045 702 873 262" className="block w-[873px] h-[262px] bg-white border-0">
    <rect x="1045.500" y="702.500" width="872" height="261" fill="#fff" stroke="#000" />
    <text x="1482" y="720" textAnchor="middle" fontSize="12" fontWeight="700" fill="#000" fontFamily="Liberation Sans, Noto Sans CJK SC, sans-serif">Pressure - 压力</text>
    <rect x="1089.500" y="729.500" width="160" height="10" fill="#fff" stroke="#000" />
    <rect x="1099.500" y="733" width="3" height="3" fill="#f00" />
    <text x="1118" y="737" fontSize="9" fill="#555" fontFamily="Liberation Sans, Noto Sans CJK SC, sans-serif">N02 - 监测值</text>
    <path d="M1172 735h12" stroke="#0000f0" strokeWidth="1.500" />
    <text x="1198" y="737" fontSize="9" fill="#555" fontFamily="Liberation Sans, Noto Sans CJK SC, sans-serif">N02 - 计算值</text>
    <rect x="1090.500" y="744.500" width="807" height="180" fill="none" stroke="#000" />
    {minorX.map((x, i) => {
      const major = i % 7 === 0;
      const len = major ? 4 : 2;
      return (
        <g key={i}>
          <path d={`M${x.toFixed(1)} 924.500v-${len + 1}`} stroke="#000" />
          <path d={`M${x.toFixed(1)} 744.500v${len + 1}`} stroke="#000" />
        </g>
      );
    })}
    {yTicks.map((y, i) => (
      <path key={i} d={`M${i % 5 === 0 ? 1088 : 1089} ${y + 0.5}h${i % 5 === 0 ? 5 : 3}`} stroke="#000" />
    ))}
    {[32, 30, 28, 26, 24, 22, 20, 18, 16, 14].map((v, i) => (
      <text key={v} x="1081" y={748 + i * 20} textAnchor="end" fontSize="11" fill="#111" fontFamily="Liberation Sans">{v}</text>
    ))}
    {timeLabels.map((t, i) => (
      <text key={t} x={1092 + i * 39} y="941" textAnchor="middle" fontSize="11" fill="#111" fontFamily="Liberation Sans">{t}</text>
    ))}
    <text x="1492" y="957" textAnchor="middle" fontSize="11" fontWeight="700" fill="#111" fontFamily="Liberation Sans">Times</text>
    <text x="0" y="0" transform="translate(1061 834) rotate(-90)" textAnchor="middle" fontSize="12" fontWeight="700" fill="#111" fontFamily="Liberation Serif, Noto Sans CJK SC, sans-serif">压力</text>
    <path d="M1326.500 744v165" stroke="#1f9a1f" />
    {redDots.map(([x, y], i) => <rect key={i} x={x - 1.500} y={y - 1.500} width="3" height="3" fill="#f00" />)}
    <polyline points={bluePts} fill="none" stroke="#0000f0" strokeWidth="1.300" />
    <rect x="1326.500" y="909.500" width="74" height="39" fill="#dcdcdc" fillOpacity="0.9" stroke="#000" />
    <g fontSize="8.500" fill="#333" fontFamily="Liberation Sans, Noto Sans CJK SC, sans-serif">
      <text x="1328" y="916">Time: 7:00</text>
      <text x="1328" y="935">N02 - 监测值 : 23</text>
      <text x="1328" y="945">N02 - 计算值 : 22.22</text>
    </g>
  </svg>
);

const ChartWindow = () => (
  <div className="absolute left-[706px] top-[397px] w-[883px] h-[382px] bg-white border-l border-t border-[#b8b8b8] shadow-[0_0_6px_rgba(0,0,0,0.3)] flex flex-col">
    <WindowTitle title="结果图示" height="h-[35px]" />
    <div className="h-[29px] flex items-end border-b border-[#bdbdbd] text-[15px] text-[#222] relative">
      <div className="w-[50px] h-[28px] bg-white border-t border-r border-[#bdbdbd] pl-[9px] leading-[26px]">图示</div>
      <div className="w-[67px] h-[25px] bg-[#e6e6e6] border-t border-r border-[#cfcfcf] pl-[5px] leading-[24px]">数据表1</div>
      <div className="w-[68px] h-[25px] bg-[#e6e6e6] border-t border-r border-[#cfcfcf] pl-[7px] leading-[24px]">数据表2</div>
      <div className="ml-auto mr-[12px] mb-[2px] flex items-center gap-[8px]">
        <span className="w-[16px] h-[16px] border border-[#777] bg-white" />
        <span>只显示当前选中对象的图示</span>
      </div>
    </div>
    <div className="mt-[2px] ml-[4px] flex-1 bg-[#e3e3e3] mb-[3px]">
      <div className="flex items-center h-[27px] mt-[7px] ml-[6px] text-[15px] text-[#222]">
        <DropField text="Pressure" w="w-[92px]" />
        <span className="w-[8px] shrink-0" />
        <TextField text="SP00025" w="w-[153px]" />
        <span className="w-[7px] shrink-0" />
        <DotsButton />
        <span className="w-[6px] shrink-0" />
        <DropField text="压力" w="w-[122px]" />
        <span className="w-[30px] shrink-0" />
        <span className="w-[15px] h-[16px] border border-[#777] bg-white shrink-0" />
        <span className="ml-[6px] w-[32px] shrink-0">Y2</span>
        <DropField text="Pressure" w="w-[92px]" />
        <span className="w-[9px] shrink-0" />
        <TextField text="SP00025" w="w-[152px]" />
        <span className="w-[7px] shrink-0" />
        <DotsButton />
        <span className="w-[7px] shrink-0" />
        <div className="flex items-center h-[27px] w-[67px] bg-white border-2 border-[#d0d0d0] border-t-[#8f8f8f] border-l-[#8f8f8f] pl-[3px] shrink-0">压力</div>
      </div>
      <div className="mt-[11px] ml-[3px]"><PressureChart /></div>
    </div>
  </div>
);

export default function App() {
  return (
    <div className="w-[1920px] h-[996px] overflow-hidden flex flex-col bg-white font-['Noto_Sans_CJK_SC','Noto_Sans',sans-serif]">
      <div className="h-[33px] shrink-0 flex items-end border-b border-[#d8d8d8] bg-white text-[15px] text-[#111] relative">
        <div className="w-[75px] h-[30px] bg-[#2b5797] text-white text-center leading-[28px] mb-[1px]">文件</div>
        <div className="w-[49px] h-[31px] ml-[1px] bg-white border-t border-l border-r border-[#d8d8d8] text-center leading-[28px] -mb-px">主页</div>
        <div className="ml-[11px] h-[31px] leading-[28px]">关于</div>
        <svg viewBox="0 0 16 10" width="14" height="9" className="absolute right-[8px] top-[15px]">
          <path d="M1.500 8.500L8 2l6.500 6.500" stroke="#111" strokeWidth="2.500" fill="none" />
        </svg>
      </div>
      <Ribbon />
      <div className="flex-1 flex min-h-0">
        <LeftPanel />
        <div className="flex-1 flex flex-col min-w-0">
          <Toolbar />
          <div className="relative flex-1">
            <NetworkMap />
            <TableWindow />
            <ChartWindow />
          </div>
        </div>
      </div>
      <div className="h-[23px] shrink-0 flex items-end bg-[#2b5797] text-white">
        <span className="ml-[13px] w-[137px] text-[15px] leading-[22px]">已计算</span>
        <span className="w-[78px] h-[20px] border border-[#aab6c6] border-b-0 text-[15px] leading-[19px] text-center whitespace-nowrap">选择对象...</span>
        <span className="ml-auto mr-[2px] w-[192px] h-[19px] border border-[#aab6c6] border-b-0 text-[16px] leading-[19px] pl-[3px] whitespace-nowrap overflow-hidden">X,Y: 9392.1328, 1089.0775</span>
      </div>
    </div>
  );
}
